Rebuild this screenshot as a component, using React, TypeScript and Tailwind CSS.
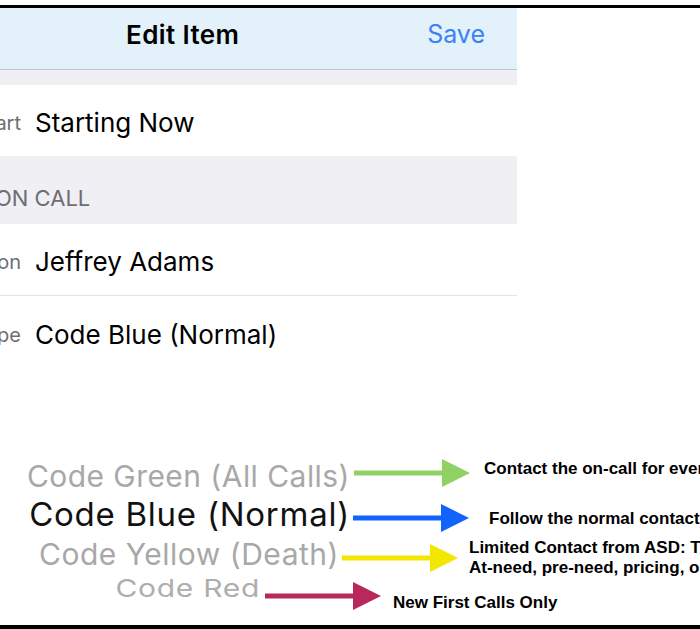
import { FC } from 'react';

interface ArrowProps {
  color: string;
}

const Arrow: FC<ArrowProps> = ({ color }) => (
  <svg width="116" height="28" viewBox="0 0 116 28" className="shrink-0">
    <rect x="0" y="11.5" width="90" height="5" fill={color} />
    <polygon points="88,0 116,14 88,28" fill={color} />
  </svg>
);

interface RowProps {
  label: string;
  value: string;
  divider?: boolean;
}

const FieldRow: FC<RowProps> = ({ label, value, divider }) => (
  <div className={`h-[72px] pt-[5px] flex items-center ${divider ? 'border-b border-[#e3e3e8]' : ''}`}>
    <div className="w-[21px] flex justify-end overflow-hidden whitespace-nowrap shrink-0">
      <span className="text-[20px] leading-none text-[#6d6d72]">{label}</span>
    </div>
    <span className="ml-[14px] text-[26px] leading-none text-black">{value}</span>
  </div>
);

const App: FC = () => {
  return (
    <div className="w-[700px] h-[629px] overflow-hidden bg-white flex flex-col font-['Inter',sans-serif]">
      <div className="h-[5px] shrink-0" />
      <div className="h-[3px] bg-black shrink-0" />

      {/* edit item panel */}
      <div className="w-[517px] flex flex-col shrink-0">
        <div className="h-[62px] bg-[#e3f1fb] border-b border-[#bcc6ce] flex items-start pt-[14px] pl-[126px] pr-[32px]">
          <span className="text-[26px] leading-none font-semibold tracking-[0.4px] text-black">Edit Item</span>
          <span className="ml-auto text-[25px] leading-none text-[#3a82f7]">Save</span>
        </div>
        <div className="h-[15px] bg-[#efeff4]" />
        <div className="h-[71px] pt-[5px] flex items-center">
          <div className="w-[21px] flex justify-end overflow-hidden whitespace-nowrap shrink-0">
            <span className="text-[20px] leading-none text-[#6d6d72]">Start</span>
          </div>
          <span className="ml-[14px] text-[26px] leading-none text-black">Starting Now</span>
        </div>
        <div className="h-[68px] bg-[#efeff4] pt-[31px]">
          <span className="block -ml-[5px] text-[22px] leading-none text-[#6d6d72] whitespace-nowrap">ON CALL</span>
        </div>
        <FieldRow label="Person" value="Jeffrey Adams" divider />
        <FieldRow label="Type" value="Code Blue (Normal)" />
      </div>

      {/* legend */}
      <div className="mt-[87px] flex flex-col whitespace-nowrap">
        <div className="h-[40px] flex items-start">
          <div className="w-[354px] pr-[4px] flex justify-end shrink-0">
            <span className="mt-[6px] text-[30px] leading-none tracking-[0.45px] text-[#a8a8a8]">Code Green (All Calls)</span>
          </div>
          <div className="mt-[4px]">
            <Arrow color="#8fd263" />
          </div>
          <span className="ml-[14px] mt-[5px] text-[17px] leading-none font-bold text-black font-['Liberation_Sans',Arial,sans-serif]">
            Contact the on-call for everything
          </span>
        </div>

        <div className="h-[40px] flex items-start">
          <div className="w-[353px] pr-[3px] flex justify-end shrink-0">
            <span className="mt-[3px] text-[33px] leading-none tracking-[0.75px] text-[#111]">Code Blue (Normal)</span>
          </div>
          <div className="mt-[9px]">
            <Arrow color="#1063fd" />
          </div>
          <span className="ml-[20px] mt-[15px] text-[17px] leading-none font-bold text-black font-['Liberation_Sans',Arial,sans-serif]">
            Follow the normal contact procedure
          </span>
        </div>

        <div className="h-[40px] flex items-start">
          <div className="w-[342px] pr-[3px] flex justify-end shrink-0">
            <span className="mt-[4px] text-[30px] leading-none tracking-[0.5px] text-[#a8a8a8]">Code Yellow (Death)</span>
          </div>
          <div className="mt-[9px]">
            <Arrow color="#f3e600" />
          </div>
          <div className="ml-[11px] mt-[3px] text-[17px] leading-[20px] font-bold text-black font-['Liberation_Sans',Arial,sans-serif]">
            <div>Limited Contact from ASD: Time-sensitive</div>
            <div>At-need, pre-need, pricing, or questions</div>
          </div>
        </div>

        <div className="h-[50px] flex items-start">
          <div className="w-[265px] pr-[5px] flex justify-end shrink-0">
            <span className="-mt-[2px] inline-block text-[30px] leading-none tracking-[0.7px] scale-y-[0.82] text-[#aeaeae]">Code Red</span>
          </div>
          <div className="mt-[7px]">
            <Arrow color="#b9285b" />
          </div>
          <span className="ml-[12px] mt-[19px] text-[17px] leading-none font-bold text-black font-['Liberation_Sans',Arial,sans-serif]">
            New First Calls Only
          </span>
        </div>
      </div>

      <div className="h-[4px] bg-black shrink-0" />
    </div>
  );
};

export default App;
